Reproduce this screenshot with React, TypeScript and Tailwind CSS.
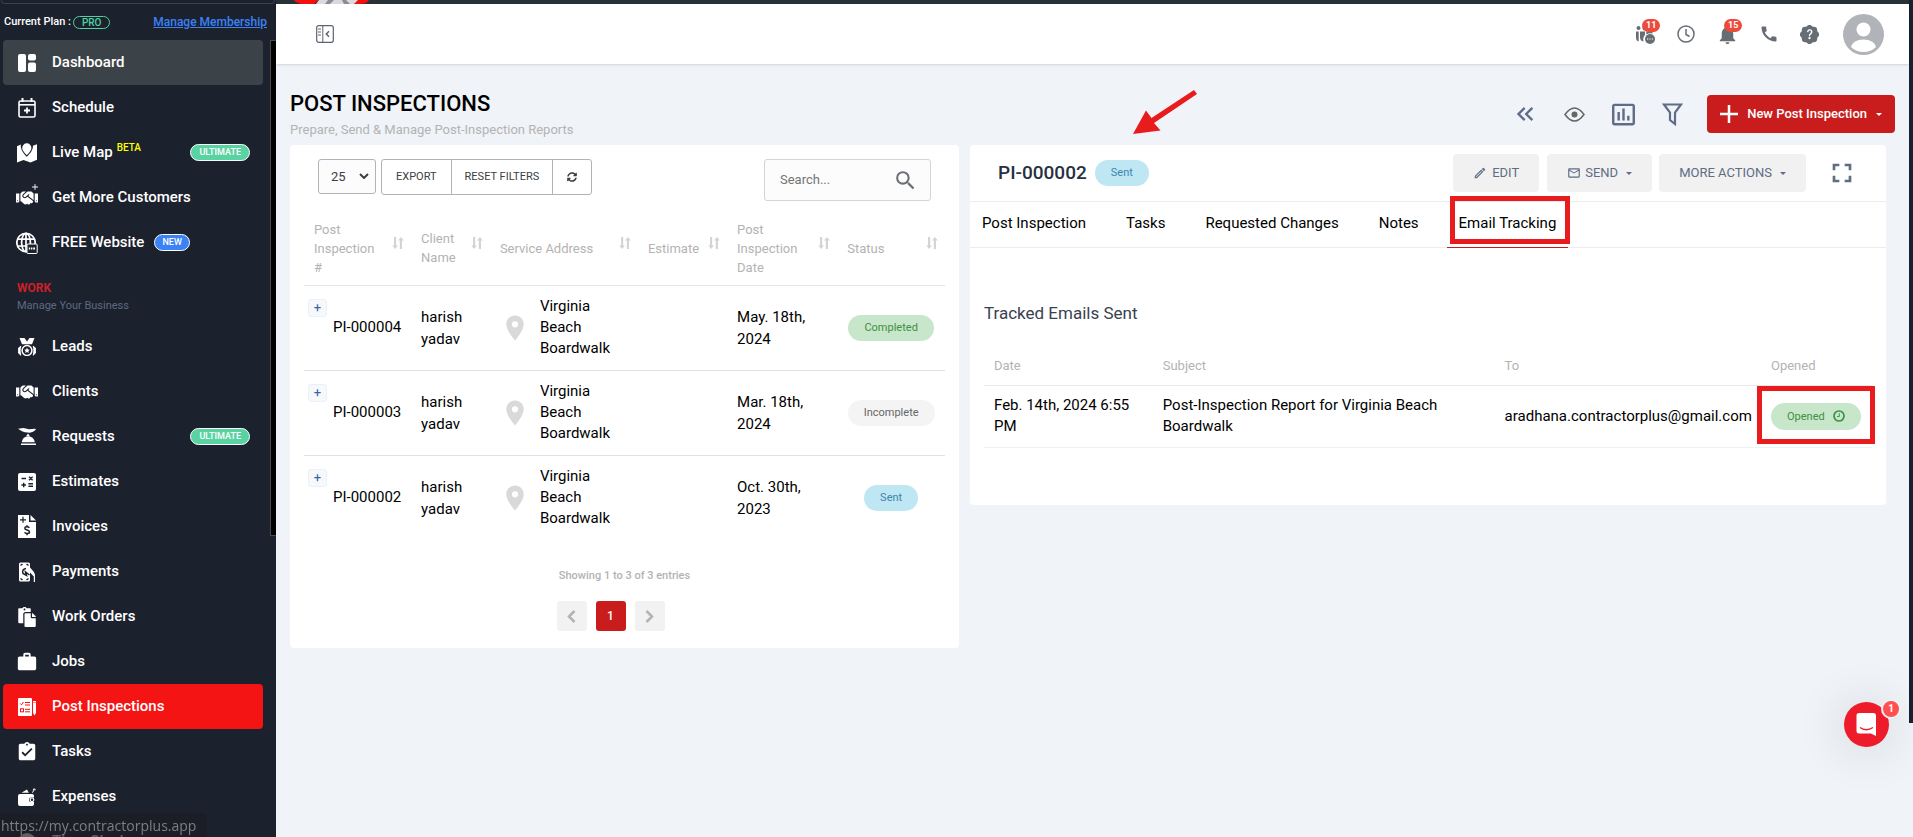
import { useState, type ReactNode } from 'react';
import { FaHandshake, FaPaste, FaSyncAlt } from 'react-icons/fa';
import {
  MdAdd,
  MdAssignmentTurnedIn,
  MdCall,
  MdFullscreen,
  MdInsertChartOutlined,
  MdKeyboardDoubleArrowLeft,
  MdLocationOn,
  MdMailOutline,
  MdNotifications,
  MdOutlineModeEdit,
  MdSearch,
  MdWork
} from 'react-icons/md';
import { BsPatchQuestionFill } from 'react-icons/bs';

interface NavItem {
  label: string;
  icon: ReactNode;
  tag?: string;
}

interface Inspection {
  id: string;
  client: string;
  address: string;
  date: string;
  status: 'Completed' | 'Incomplete' | 'Sent';
}

const DashboardIcon = () => (
  <svg viewBox="0 0 18 18" className="h-[18px] w-[18px]" fill="currentColor">
    <rect x="0" y="0" width="8" height="18" rx="2" />
    <rect x="10" y="0" width="8" height="6.5" rx="2" />
    <rect x="10" y="8.5" width="8" height="9.5" rx="2" />
  </svg>
);

const ScheduleIcon = () => (
  <svg viewBox="0 0 18 20" className="h-5 w-[18px]" fill="none" stroke="currentColor">
    <rect x="1" y="3" width="16" height="16" rx="1.5" strokeWidth="1.6" />
    <path d="M1 6.8h16" strokeWidth="1.6" />
    <path d="M4.5 0v4M13.5 0v4" strokeWidth="2" />
    <path d="M9 9.5v6M6 12.5h6" strokeWidth="1.8" />
  </svg>
);

const MapIcon = () => (
  <svg viewBox="0 0 20 20" className="h-5 w-5" fill="currentColor">
    <path d="M0 3.2 3.8 1.6C3.3 6 6.2 10.5 9.8 13.8 13.4 10.5 16.5 6 15.9 2.8L20 1.2V16.8L13.5 19.5 6.5 17 0 19.5Z" />
    <path d="M9.8 .3A4.6 4.6 0 0 0 5.2 4.9C5.2 8 9.8 12 9.8 12S14.4 8 14.4 4.9A4.6 4.6 0 0 0 9.8 .3Z" />
  </svg>
);

const CustomersIcon = () => (
  <span className="relative block">
    <FaHandshake className="h-[22px] w-[22px]" />
    <MdAdd className="absolute -top-[5px] -right-[2px] h-[10px] w-[10px]" />
  </span>
);

const WebsiteIcon = () => (
  <svg viewBox="0 0 22 22" className="h-[22px] w-[22px]" fill="none" stroke="currentColor" strokeWidth="1.7">
    <circle cx="10" cy="10.5" r="9.2" />
    <ellipse cx="10" cy="10.5" rx="4.4" ry="9.2" />
    <path d="M1.5 7.2h17M1.5 14h17M10 1v19" />
    <rect x="11" y="12" width="10.2" height="9.5" rx="1" fill="#1c212e" strokeWidth="1" />
    <path d="M12.8 16.5h1.4M15 16.5h1.4M17.2 16.5h1.8" strokeWidth="2" />
  </svg>
);

const LeadsIcon = () => (
  <svg viewBox="0 0 18 18" className="h-[18px] w-[18px]" fill="currentColor">
    <path d="M1.5 0H6.5L9 3.5 11.5 0H16.5L14 6.2H4Z" />
    <circle cx="9" cy="12.5" r="4.9" fill="none" stroke="currentColor" strokeWidth="1.5" />
    <path d="m9 9.8.9 1.7 1.9.3-1.4 1.3.3 1.9L9 14.1l-1.7.9.3-1.9-1.4-1.3 1.9-.3Z" />
    <path d="M2.8 8.2C-.8 10-.8 15 2.8 17.2 1.9 14.5 1.9 11 2.8 8.2ZM15.2 8.2c3.6 1.8 3.6 6.8 0 9 .9-2.7.9-6.2 0-9Z" stroke="currentColor" />
  </svg>
);

const RequestsIcon = () => (
  <svg viewBox="0 0 18 17" className="h-[17px] w-[18px]" fill="currentColor">
    <path d="M0 .8 5.5 0 11 1.2 17 .8 18 1.5 15.5 3.5 12 4.8 7 4.2 4 3.2Z" />
    <path d="M10 5.5 11.8 8 8.2 8Z" />
    <path d="M3.8 14.2C4.2 10.5 7 8.2 10.2 8.2S16.3 10.5 16.8 14.2Z" />
    <path d="M3 15.5h15V17H3Z" />
  </svg>
);

const EstimatesIcon = () => (
  <svg viewBox="0 0 18 18" className="h-[18px] w-[18px]">
    <rect width="18" height="18" rx="2" fill="currentColor" />
    <path d="M3.5 5.5h4.5M11 3.7l3.6 3.6M14.6 3.7 11 7.3M5.7 9.7v4.6M3.4 12h4.6M10.4 10.7h4.6M10.4 13.3h4.6" stroke="#1c212e" strokeWidth="1.4" />
  </svg>
);

const InvoicesIcon = () => (
  <svg viewBox="0 0 18 23" className="h-[23px] w-[18px]">
    <path d="M0 0H11V7H18V23H0Z" fill="currentColor" />
    <path d="M12.5 0 18 5.5H12.5Z" fill="currentColor" />
    <path d="M5 1.8v6M2 4.8h6" stroke="#1c212e" strokeWidth="1.2" />
    <path d="M11.3 12.8C10.5 11.5 6.8 11.4 6.8 13.3 6.8 15.5 11.5 14.5 11.5 17 11.5 19 7.5 18.9 6.5 17.4M9 10.3v1.6M9 18.5v1.7" stroke="#1c212e" strokeWidth="1.5" fill="none" />
  </svg>
);

const PaymentsIcon = () => (
  <svg viewBox="0 0 18 20" className="h-5 w-[18px]">
    <path d="M2.5 .5H10.5Q12 .5 12 2V5.5L15.5 9.5Q17 11.5 17 14V20H15.8V14.5L12 10.5V18Q12 19.5 10.5 19.5H2.5Q1 19.5 1 18V2Q1 .5 2.5 .5Z" fill="currentColor" />
    <path d="M8 6.5Q3.5 7.5 5 11.5L8.5 13.5 7.5 10 11.5 13M2.5 3.5 4.5 2M8.5 2l2 1.5M2.5 16.5l2 1.5M8.5 18l2-1.5" stroke="#1c212e" strokeWidth="1.5" fill="none" />
  </svg>
);

const InspectionIcon = () => (
  <svg viewBox="0 0 18 18" className="h-[18px] w-[18px]">
    <rect width="14" height="18" rx="1" fill="currentColor" />
    <path d="M15 4.5h3V15l-1.5 2.5L15 15ZM15 3h3v1h-3Z" fill="currentColor" />
    <path d="M2.3 5.5 3.5 6.8 5.5 4M7 4.5h5M7 7h5M7 11.3h5M7 13.8h5" stroke="#f41414" strokeWidth="1" fill="none" />
    <rect x="2.5" y="10.8" width="3" height="3" fill="none" stroke="#f41414" strokeWidth="1" />
  </svg>
);

const ExpensesIcon = () => (
  <svg viewBox="0 0 18 18" className="h-[18px] w-[18px]">
    <path d="M2 6H14Q16 6 16 8V9.5H13Q11 9.5 11 11.8T13 14H16V16Q16 18 14 18H2Q0 18 0 16V8Q0 6 2 6Z" fill="currentColor" />
    <path d="M3.5 4.8 9 1.5 10.8 4.8Z" fill="currentColor" />
    <path d="M14 4.5Q16 4 16.2 1M14.8 2 16.3 .6 17.6 2.2" fill="none" stroke="currentColor" />
    <circle cx="14" cy="11.8" r="1.8" fill="none" stroke="currentColor" strokeWidth="1.2" />
  </svg>
);

const SortIcon = () => (
  <svg viewBox="0 0 12 12" className="h-3 w-3 shrink-0 text-[#d4d4d4]" fill="currentColor">
    <path d="M2 0H4.2V8.5H6L3.1 12 .2 8.5H2ZM7.8 12H10V3.5H11.8L8.9 0 6 3.5H7.8Z" />
  </svg>
);

const ClockIcon = () => (
  <svg viewBox="0 0 18 18" className="h-[18px] w-[18px]" fill="none" stroke="currentColor" strokeWidth="1.5">
    <circle cx="9" cy="9" r="8" />
    <path d="M9 4v5.5l3.5 2" />
  </svg>
);

const TimeClockIcon = () => (
  <svg viewBox="0 0 18 18" className="h-[18px] w-[18px]">
    <circle cx="9" cy="9" r="9" fill="currentColor" />
    <path d="M9 5v5l3 2" fill="none" stroke="#1c212e" strokeWidth="1.5" />
  </svg>
);

const OpenedIcon = () => (
  <svg viewBox="0 0 12 12" className="ml-2 h-3 w-3" fill="none" stroke="currentColor">
    <circle cx="6" cy="6" r="5" strokeWidth="1.7" />
    <path d="M6.3 3.2V6.5H4" />
  </svg>
);

const Caret = () => (
  <svg viewBox="0 0 6 3" className="h-[3px] w-[6px]" fill="currentColor">
    <path d="M0 0H6L3 3Z" />
  </svg>
);

const mainNav: NavItem[] = [
  { label: 'Dashboard', icon: <DashboardIcon /> },
  { label: 'Schedule', icon: <ScheduleIcon /> },
  { label: 'Live Map', icon: <MapIcon />, tag: 'ULTIMATE' },
  { label: 'Get More Customers', icon: <CustomersIcon /> },
  { label: 'FREE Website', icon: <WebsiteIcon /> }
];

const workNav: NavItem[] = [
  { label: 'Leads', icon: <LeadsIcon /> },
  { label: 'Clients', icon: <FaHandshake className="h-[22px] w-[22px]" /> },
  { label: 'Requests', icon: <RequestsIcon />, tag: 'ULTIMATE' },
  { label: 'Estimates', icon: <EstimatesIcon /> },
  { label: 'Invoices', icon: <InvoicesIcon /> },
  { label: 'Payments', icon: <PaymentsIcon /> },
  { label: 'Work Orders', icon: <FaPaste className="h-5 w-5" /> },
  { label: 'Jobs', icon: <MdWork className="h-[22px] w-[22px]" /> },
  { label: 'Post Inspections', icon: <InspectionIcon /> },
  { label: 'Tasks', icon: <MdAssignmentTurnedIn className="h-[22px] w-[22px]" /> },
  { label: 'Expenses', icon: <ExpensesIcon /> },
  { label: 'Time Clock', icon: <TimeClockIcon /> }
];

const inspections: Inspection[] = [
  { id: 'PI-000004', client: 'harish yadav', address: 'Virginia Beach Boardwalk', date: 'May. 18th, 2024', status: 'Completed' },
  { id: 'PI-000003', client: 'harish yadav', address: 'Virginia Beach Boardwalk', date: 'Mar. 18th, 2024', status: 'Incomplete' },
  { id: 'PI-000002', client: 'harish yadav', address: 'Virginia Beach Boardwalk', date: 'Oct. 30th, 2023', status: 'Sent' }
];

const columns = [
  { label: 'Post Inspection #', width: 'w-[16.7%]' },
  { label: 'Client Name', width: 'w-[12.3%]' },
  { label: 'Service Address', width: 'w-[23.1%]' },
  { label: 'Estimate', width: 'w-[13.9%]' },
  { label: 'Post Inspection Date', width: 'w-[17.2%]' },
  { label: 'Status', width: 'w-[16.8%]' }
];

const tabs = ['Post Inspection', 'Tasks', 'Requested Changes', 'Notes', 'Email Tracking'];

const statusColors = {
  Completed: 'bg-[#c8e6c9] text-[#3f8f44]',
  Incomplete: 'bg-[#f4f4f4] text-[#666666]',
  Sent: 'bg-[#bfe6f3] text-[#3a87ad]'
};

const StatusPill = ({ status }: { status: Inspection['status'] }) => (
  <span className={`inline-block rounded-full px-4 text-[11px] leading-[26px] ${statusColors[status]}`}>{status}</span>
);

const NavLink = ({ item }: { item: NavItem }) => {
  let background = '';
  if (item.label === 'Dashboard') background = 'bg-[#3c4348]';
  if (item.label === 'Post Inspections') background = 'bg-[#f41414]';

  return (
    <a href="#" className={`flex h-[45px] items-center rounded pr-[13px] text-[15px] font-medium text-white ${background}`}>
      <span className="flex w-12 justify-center">{item.icon}</span>
      <span className="ml-px">{item.label}</span>
      {item.label === 'Live Map' && <sup className="ml-1 text-[10px] text-[#ffff00]">BETA</sup>}
      {item.label === 'FREE Website' && (
        <span className="ml-[10px] rounded-full border border-white bg-[#3b82f6] px-[7px] text-[9px] leading-[15px]">NEW</span>
      )}
      {item.tag && (
        <span className="ml-auto rounded-full border border-white bg-[#5ad3a2] px-2 text-[9px] leading-[15px]">{item.tag}</span>
      )}
    </a>
  );
};

const Sidebar = () => (
  <aside className="flex w-[276px] shrink-0 flex-col bg-[#1c212e]">
    <div className="mx-[1px] h-1 shrink-0 rounded-b-lg border border-t-0 border-[#3d424e]" />
    <div className="flex h-9 shrink-0 items-center px-1 pr-[9px]">
      <span className="text-[11px] font-medium text-white">Current Plan :</span>
      <span className="ml-[2px] rounded-full border border-[#4fd1a0] px-2 text-[10px] leading-[11px] font-medium text-[#4fd1a0]">PRO</span>
      <a href="#" className="ml-auto text-xs font-medium text-[#3b82f6] underline">Manage Membership</a>
    </div>
    <div className="flex min-h-0 flex-1 items-start overflow-hidden">
      <nav className="mr-[7px] ml-[3px] flex-1">
        {mainNav.map((item) => <NavLink key={item.label} item={item} />)}
        <div className="flex h-[59px] flex-col justify-center pt-1 pl-[14px]">
          <h2 className="text-xs leading-[18px] font-bold text-[#cb2027]">WORK</h2>
          <p className="text-[11px] leading-[18px] text-[#5d6a83]">Manage Your Business</p>
        </div>
        {workNav.map((item) => <NavLink key={item.label} item={item} />)}
      </nav>
      <div className="h-[496px] w-[6px] border border-r-0 border-[#4a4a4a] bg-black" />
    </div>
  </aside>
);

const TopBar = () => (
  <header className="border-t-4 border-[#263238] bg-white shadow">
    <div className="flex h-[60px] items-center pr-[25px] pl-10">
      <button type="button" aria-label="Collapse menu" className="text-[#5c6370]">
        <svg viewBox="0 0 18 18" className="h-[18px] w-[18px]" fill="none" stroke="currentColor">
          <rect x=".7" y=".7" width="16.6" height="16.6" rx="2" strokeWidth="1.2" />
          <path d="M6.8 1v16M2 4h3M2 7h3M2 10h3" />
          <path d="m13 6.3-2.7 2.7L13 11.7" strokeWidth="1.5" />
        </svg>
      </button>
      <div className="ml-auto flex items-center text-[#666d75]">
        <button type="button" aria-label="Team chat" className="relative mr-5">
          <svg viewBox="0 0 22 20" className="h-5 w-[22px]" fill="currentColor">
            <circle cx="3.5" cy="4" r="2" />
            <circle cx="10" cy="4" r="2.5" />
            <path d="M1 7.5h2.7v10Q1 17 1 13.5ZM5 7.5h5v3.5q-2.5 2.5-1.5 6.5Q5 17 5 13ZM11.3 7.5h6.200v2q-3.500-.8-6.200 1Z" />
            <circle cx="15" cy="15" r="5" />
            <path d="M12 15h1.2M14.4 15h1.2M16.8 15H18" stroke="white" strokeWidth="1.2" />
          </svg>
          <span className="absolute -top-[5px] left-[7px] rounded-full bg-[#ec4b3c] px-[4px] text-[9px] leading-[13px] font-bold text-white">11</span>
        </button>
        <button type="button" aria-label="Time" className="mr-[21px]"><ClockIcon /></button>
        <button type="button" aria-label="Notifications" className="relative mr-5">
          <MdNotifications className="h-[23px] w-[23px]" />
          <span className="absolute -top-[4px] left-2 rounded-full bg-[#ec4b3c] px-[4px] text-[9px] leading-[13px] font-bold text-white">15</span>
        </button>
        <button type="button" aria-label="Call" className="mr-[21px]"><MdCall className="h-5 w-5" /></button>
        <button type="button" aria-label="Help" className="mr-6"><BsPatchQuestionFill className="h-[19px] w-[19px]" /></button>
        <button type="button" aria-label="Account">
          <svg viewBox="0 0 41 41" className="h-[41px] w-[41px]">
            <circle cx="20.5" cy="20.5" r="20.5" fill="#b0b3b8" />
            <circle cx="20.5" cy="15.5" r="7" fill="white" />
            <path d="M8 33Q10 25.5 20.5 25.5T33 33Q28 38 20.5 38T8 33Z" fill="white" />
          </svg>
        </button>
      </div>
    </div>
  </header>
);

const InspectionList = () => (
  <section className="rounded bg-white px-[14px] pt-[14px] pb-[17px]">
    <div className="mx-[14px] flex items-start text-[#3c4043]">
      <div className="relative">
        <select aria-label="Rows per page" defaultValue="25" className="h-[35px] w-[58px] appearance-none rounded-[3px] border border-[#b3b3b3] bg-[#fcfcfc] pl-3 text-[13px]">
          <option>25</option>
          <option>50</option>
        </select>
        <svg viewBox="0 0 10 6" className="pointer-events-none absolute top-[14px] right-[7px] h-[6px] w-[10px]" fill="none" stroke="currentColor" strokeWidth="2">
          <path d="m1 1 4 4 4-4" />
        </svg>
      </div>
      <div className="ml-[5px] flex h-9 divide-x divide-[#b3b3b3] rounded-[3px] border border-[#b3b3b3] text-[11px]">
        <button type="button" className="px-[14px]">EXPORT</button>
        <button type="button" className="px-[13px]">RESET FILTERS</button>
        <button type="button" aria-label="Refresh" className="px-[14px]"><FaSyncAlt className="h-[10px] w-[10px]" /></button>
      </div>
      <div className="ml-auto flex h-[42px] w-[167px] items-center rounded-[3px] border border-[#d4d4d4] bg-[#fcfcfc] pr-3 pl-[15px] text-[#6b6f76]">
        <input type="text" aria-label="Search" placeholder="Search..." className="w-full min-w-0 text-[13px] outline-none placeholder:text-[#757575]" />
        <MdSearch className="h-[25px] w-[25px] shrink-0" />
      </div>
    </div>

    <table className="mt-[11px] w-full table-fixed border-collapse text-left">
      <thead>
        <tr className="h-[73px] border-b border-[#e2e5e9]">
          {columns.map((column) => (
            <th key={column.label} className={`${column.width} pr-[7px] pl-[10px] text-[13px] leading-[19px] font-normal text-[#b3b3b3]`}>
              <span className="flex items-center justify-between gap-2">
                {column.label}
                <span className="pb-[10px]"><SortIcon /></span>
              </span>
            </th>
          ))}
        </tr>
      </thead>
      <tbody className="text-[15px] leading-[21px] text-black">
        {inspections.map((row) => (
          <tr key={row.id} className="h-[85px] border-b border-[#dbe3ea] last:border-b-0">
            <td className="p-0">
              <div className="flex h-[58px] items-start pl-1">
                <button type="button" aria-label={`Expand ${row.id}`} className="h-[18px] w-[19px] rounded-[3px] border border-[#e9f2fc] bg-[#f6f8fa] text-[13px] leading-[14px] text-[#3563a8]">+</button>
                <span className="ml-[6px] self-center">{row.id}</span>
              </div>
            </td>
            <td className="pr-5 pl-[10px] leading-[22px]">{row.client}</td>
            <td className="pr-5 pl-[10px]">
              <div className="flex items-center">
                <MdLocationOn className="h-[30px] w-[30px] shrink-0 text-[#d9d9d9]" />
                <span className="ml-[10px]">{row.address}</span>
              </div>
            </td>
            <td />
            <td className="pr-6 pl-[10px] leading-[22px]">{row.date}</td>
            <td className="text-center"><StatusPill status={row.status} /></td>
          </tr>
        ))}
      </tbody>
    </table>

    <div className="mt-[25px] flex flex-col items-center">
      <p className="text-[11px] leading-[22px] font-medium text-[#b3b3b3]">Showing 1 to 3 of 3 entries</p>
      <div className="mt-[14px] mr-[28px] flex gap-[9px] text-[#b3b3b3]">
        <button type="button" aria-label="Previous page" className="flex h-[30px] w-[30px] items-center justify-center rounded-[3px] bg-[#f2f2f2]">
          <svg viewBox="0 0 9 13" className="h-[13px] w-[9px]" fill="none" stroke="currentColor" strokeWidth="2.5"><path d="M7.5 1 2 6.5 7.5 12" /></svg>
        </button>
        <button type="button" className="h-[30px] w-[30px] rounded-[3px] bg-[#c91d1d] text-xs font-medium text-white">1</button>
        <button type="button" aria-label="Next page" className="flex h-[30px] w-[30px] items-center justify-center rounded-[3px] bg-[#f2f2f2]">
          <svg viewBox="0 0 9 13" className="h-[13px] w-[9px]" fill="none" stroke="currentColor" strokeWidth="2.5"><path d="M1.5 1 7 6.5 1.5 12" /></svg>
        </button>
      </div>
    </div>
  </section>
);

const InspectionDetail = () => {
  const [activeTab, setActiveTab] = useState('Email Tracking');

  return (
    <section className="rounded bg-white pb-[57px]">
      <div className="flex h-[57px] items-center border-b border-[#ececec] pr-7 pl-7">
        <h2 className="mr-2 text-[19px] font-medium text-[#263040]">PI-000002</h2>
        <StatusPill status="Sent" />
        <div className="ml-auto flex items-center text-[13px] text-[#5f6d85]">
          <button type="button" className="flex h-[38px] items-center rounded bg-[#f1f1f1] px-5">
            <MdOutlineModeEdit className="mr-[5px] h-[14px] w-[14px]" />EDIT
          </button>
          <button type="button" className="ml-2 flex h-[38px] items-center rounded bg-[#f1f1f1] px-5">
            <MdMailOutline className="mr-1 h-[14px] w-[14px]" />SEND
            <span className="ml-2"><Caret /></span>
          </button>
          <button type="button" className="ml-[7px] flex h-[38px] items-center rounded bg-[#f1f1f1] px-5">
            MORE ACTIONS
            <span className="ml-2"><Caret /></span>
          </button>
          <button type="button" aria-label="Full screen" className="ml-5"><MdFullscreen className="h-8 w-8" /></button>
        </div>
      </div>

      <div className="flex h-[46px] border-b border-[#ececec] text-[15px] text-black">
        {tabs.map((tab) => (
          <button
            key={tab}
            type="button"
            onClick={() => setActiveTab(tab)}
            className={`relative -mb-px border-b px-3 pb-[3px] ${tab === activeTab ? 'border-[#c91d1d]' : 'border-transparent'} not-first:ml-4`}
          >
            {tab}
            {tab === 'Email Tracking' && <span className="pointer-events-none absolute -top-[6px] -right-[2px] left-[3px] h-12 border-[5px] border-[#e81c1c]" />}
          </button>
        ))}
      </div>

      <div className="px-[14px] pt-[53px]">
        <h3 className="text-[17px] leading-6 text-[#38424e]">Tracked Emails Sent</h3>
        <table className="mt-[22px] w-full table-fixed border-collapse text-left">
          <thead>
            <tr className="h-[38px] border-b border-[#e6e8ea] text-[13px] text-[#b3b3b3]">
              <th className="w-[19%] pl-[10px] font-normal">Date</th>
              <th className="w-[38.5%] pl-[10px] font-normal">Subject</th>
              <th className="w-[30%] pl-[10px] font-normal">To</th>
              <th className="w-[12.5%] pl-[10px] font-normal">Opened</th>
            </tr>
          </thead>
          <tbody>
            <tr className="h-[62px] border-b border-[#edf2f7] text-[15px] leading-[21px] text-black">
              <td className="pr-[10px] pl-[10px]">Feb. 14th, 2024 6:55 PM</td>
              <td className="pr-6 pl-[10px]">Post-Inspection Report for Virginia Beach Boardwalk</td>
              <td className="pl-[10px]">aradhana.contractorplus@gmail.com</td>
              <td className="relative pl-[10px]">
                <span className="inline-flex h-[27px] items-center rounded-full bg-[#c8e6c9] px-4 text-[11px] text-[#3f8f44]">
                  Opened
                  <OpenedIcon />
                </span>
                <span className="pointer-events-none absolute top-0 -right-[3px] -left-1 h-[58px] border-[5px] border-[#e81c1c]" />
              </td>
            </tr>
          </tbody>
        </table>
      </div>
    </section>
  );
};

const App = () => {
  return (
    <div className="flex h-screen overflow-hidden bg-[#f0f3f8] font-[Roboto,sans-serif]">
      <Sidebar />

      <div className="relative min-w-0 flex-1">
        <TopBar />
        {/* Bottom sliver of the brand mark */}
        <svg viewBox="0 0 80 4" className="absolute top-0 left-4 h-1 w-20">
          <path d="M2 0H27L22 4H10Q4 3 2 0Z" fill="#f40f0f" />
          <path d="M27 0H70L62 4H24Z" fill="#d9d9de" />
          <path d="M36 0h6l-4 4h-5ZM50 0h4l4 4h-6Z" fill="#8b8b93" />
          <path d="M66 0H77Q75 4 68 4H62Z" fill="#f40f0f" />
        </svg>

        <main className="pt-[25px] pr-[23px] pl-[14px]">
          <div className="flex h-14 items-start">
            <div>
              <h1 className="text-[22px] leading-[30px] font-medium text-black">POST INSPECTIONS</h1>
              <p className="text-[13px] leading-[22px] text-[#b3b3b3]">Prepare, Send &amp; Manage Post-Inspection Reports</p>
            </div>
            <div className="-mr-[9px] ml-auto flex items-center pt-[6px] text-[#5f6d88]">
              <button type="button" aria-label="Collapse list" className="mr-[25px]"><MdKeyboardDoubleArrowLeft className="h-7 w-7" /></button>
              <button type="button" aria-label="Preview" className="mr-6 text-[#666666]">
                <svg viewBox="0 0 21 15" className="h-[15px] w-[21px]" fill="none" stroke="currentColor" strokeWidth="1.5">
                  <path d="M1 7.5Q10.5-5.5 20 7.5 10.5 20.5 1 7.5Z" />
                  <circle cx="10.5" cy="7.5" r="3" fill="currentColor" stroke="none" />
                </svg>
              </button>
              <button type="button" aria-label="Statistics" className="mr-6"><MdInsertChartOutlined className="h-[29px] w-[29px]" /></button>
              <button type="button" aria-label="Filter" className="mr-6">
                <svg viewBox="0 0 21 23" className="h-[23px] w-[21px]" fill="none" stroke="currentColor" strokeWidth="2.2">
                  <path d="M2 1.5H19L13 9.5V21L8 17V9.5Z" />
                </svg>
              </button>
              <button type="button" className="flex h-[38px] items-center rounded bg-[#c91d1d] px-[13px] text-[13px] font-medium text-white">
                <svg viewBox="0 0 18 18" className="mr-[9px] h-[18px] w-[18px]" stroke="currentColor" strokeWidth="2.5"><path d="M9 0v18M0 9h18" /></svg>
                New Post Inspection
                <span className="ml-[9px]"><Caret /></span>
              </button>
            </div>
          </div>

          <div className="grid grid-cols-[669fr_916fr] items-start gap-[11px]">
            <InspectionList />
            <InspectionDetail />
          </div>
        </main>

        {/* Arrow pointing at the status */}
        <svg viewBox="0 0 66 46" className="pointer-events-none absolute top-[89px] left-[856px] h-[46px] w-[66px]" fill="#e81c1c">
          <path d="M1 45 14 21.5 19.5 29 62 1 65 5 22 34 28.5 41.5Z" />
        </svg>
      </div>

      <div className="h-[723px] w-1 shrink-0 bg-[#1a202e]" />

      <button type="button" aria-label="Open chat" className="fixed right-6 bottom-[90px] h-[45px] w-[45px] rounded-full bg-[#ee1c2a] shadow-[0_2px_50px_rgba(0,0,0,0.16)]">
        <svg viewBox="0 0 45 45" className="h-[45px] w-[45px]">
          <path d="M15 11H29.5Q32 11 32 13.5V34L27 31.5H15Q12.5 31.5 12.5 29V13.5Q12.5 11 15 11Z" fill="white" />
          <path d="M16 25.5Q22 30 29 25.5" fill="none" stroke="#ee1c2a" strokeWidth="1.4" />
        </svg>
        <span className="absolute -top-[3px] -right-[12px] h-5 w-5 rounded-full border-2 border-[#edf0f5] bg-[#ff4f4f] text-[10px] leading-4 font-bold text-white">1</span>
      </button>

      <div className="fixed bottom-0 left-0 h-6 w-[207px] rounded-tr bg-[#1b1e24]/70 pl-px font-['Open_Sans',sans-serif] text-sm leading-[26px] text-[#7c7f84]">
        https://my.contractorplus.app
      </div>
    </div>
  );
};

export default App;
